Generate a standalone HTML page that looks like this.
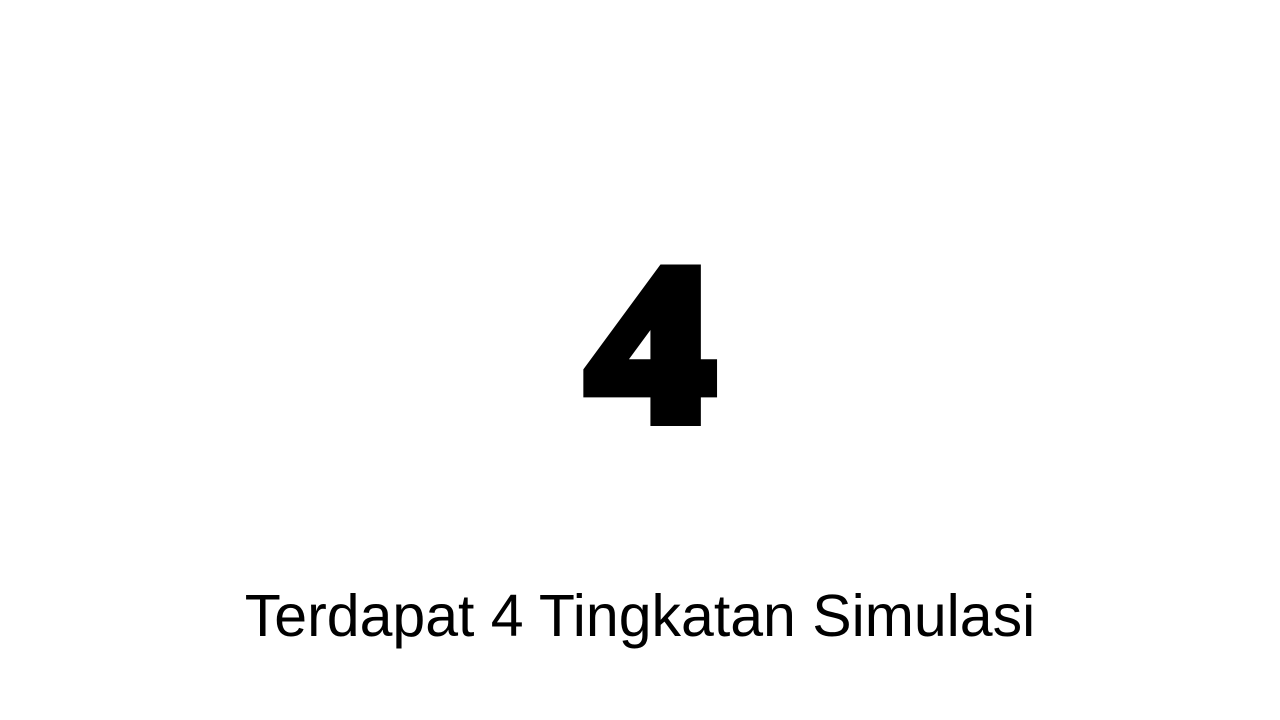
<!DOCTYPE html>
<html><head><meta charset="utf-8"><style>
html,body{margin:0;padding:0;background:#fff;width:1280px;height:720px;overflow:hidden;position:relative}
.big{position:absolute;left:12px;width:1280px;text-align:center;top:233px;font:bold 221px/1 "Liberation Serif",serif;color:#000;-webkit-text-stroke:16px #000;transform:scaleX(1.12);transform-origin:650px 0}
.cap{position:absolute;left:0;width:1280px;text-align:center;top:583px;font:59px/1.15 "Liberation Sans",sans-serif;color:#000}
</style></head><body>
<div class="big">4</div>
<div class="cap">Terdapat 4 Tingkatan Simulasi</div>
</body></html>
